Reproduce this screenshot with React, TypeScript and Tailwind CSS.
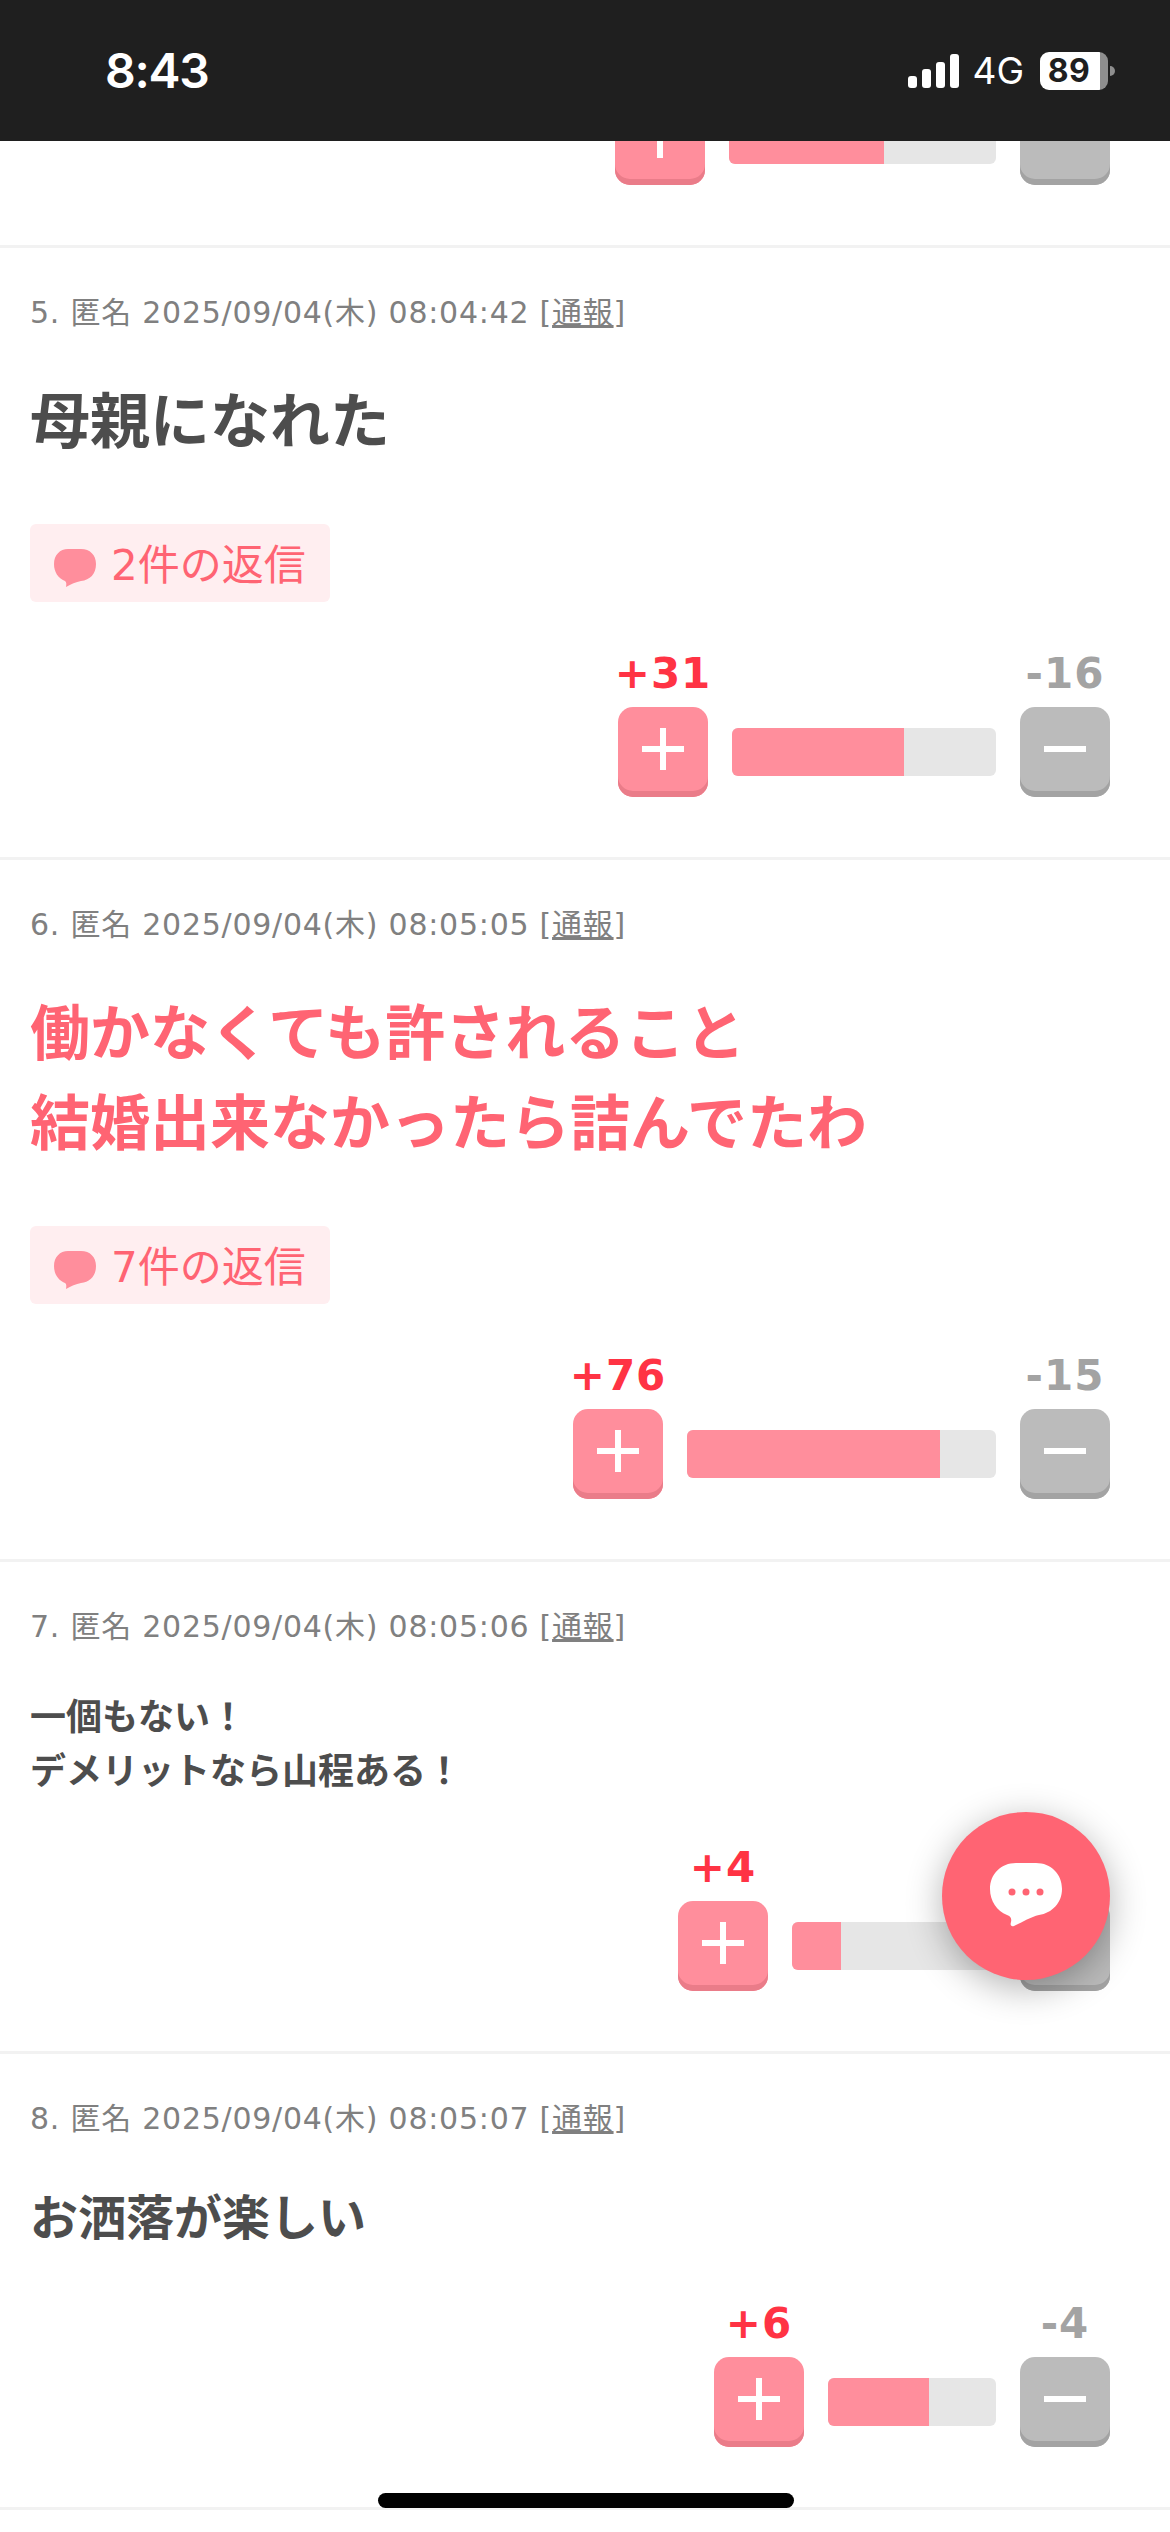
const posts = [
  {
    no: 5,
    time: "08:04:42",
    lines: ["母親になれた"],
    titleClass: "mt-[42px] mb-[-2px] text-[60px] leading-[90px] text-[#4d4d4d]",
    replies: 2,
    plus: 31,
    minus: 16,
    barClass: "w-[264px]",
    fill: 65,
  },
  {
    no: 6,
    time: "08:05:05",
    lines: ["働かなくても許されること", "結婚出来なかったら詰んでたわ"],
    titleClass: "mt-[42px] mb-[-2px] text-[60px] leading-[90px] text-[#ff6473]",
    replies: 7,
    plus: 76,
    minus: 15,
    barClass: "w-[309px]",
    fill: 82,
  },
  {
    no: 7,
    time: "08:05:06",
    lines: ["一個もない！", "デメリットなら山程ある！"],
    titleClass: "mt-[42px] mb-[-3px] text-[36px] leading-[54px] text-[#4d4d4d]",
    plus: 4,
    minus: 13,
    barClass: "w-[204px]",
    fill: 24,
  },
  {
    no: 8,
    time: "08:05:07",
    lines: ["お洒落が楽しい"],
    titleClass: "mt-[41px] mb-[-2px] text-[48px] leading-[72px] text-[#4d4d4d]",
    plus: 6,
    minus: 4,
    barClass: "w-[168px]",
    fill: 60,
  },
]

function PlusButton() {
  return (
    <div className="flex h-[90px] w-[90px] shrink-0 justify-center rounded-[15px] bg-[#ff8e9c] pt-[21px] shadow-[inset_0_-6px_0_#ea7c89]">
      <svg width="42" height="42" viewBox="0 0 42 42" fill="#fff">
        <rect x="18" y="0" width="6" height="42" />
        <rect x="0" y="18" width="42" height="6" />
      </svg>
    </div>
  )
}

function MinusButton() {
  return (
    <div className="flex h-[90px] w-[90px] shrink-0 justify-center rounded-[15px] bg-[#bbbbbb] pt-[21px] shadow-[inset_0_-6px_0_#a3a3a3]">
      <svg width="42" height="42" viewBox="0 0 42 42" fill="#fff">
        <rect x="0" y="18" width="42" height="6" />
      </svg>
    </div>
  )
}

function Bar({ barClass, fill }: { barClass: string; fill: number }) {
  return (
    <div className={`mb-[21px] h-12 overflow-hidden rounded-[6px] bg-[#e6e6e6] ${barClass}`}>
      <div className="h-full bg-[#ff8e9c]" style={{ width: `${fill}%` }} />
    </div>
  )
}

function VoteCount({ text, className }: { text: string; className: string }) {
  return (
    <div className={`mb-[6px] flex h-[54px] w-[90px] justify-center text-[42px] leading-[54px] font-bold tracking-[1px] whitespace-nowrap ${className}`}>
      {text}
    </div>
  )
}

function Post({ post }: { post: (typeof posts)[number] }) {
  return (
    <section className="border-b-[3px] border-[#f2f2f2] pt-[42px] pb-[60px]">
      <div className="px-[30px] text-[30px] leading-[45px] tracking-[0.75px] whitespace-nowrap text-[#808080]">
        {post.no}. 匿名 2025/09/04(木) {post.time} [<span className="underline">通報</span>]
      </div>
      <div className={`px-[30px] font-bold ${post.titleClass}`}>
        {post.lines.map((line) => (
          <div key={line}>{line}</div>
        ))}
      </div>
      {post.replies && (
        <div className="mt-[59px] ml-[30px] flex h-[78px] w-[300px] items-center rounded-[6px] bg-[#ffeef0] pl-6 text-[42px] text-[#ff6473]">
          <svg width="42" height="38" viewBox="0 0 42 38" fill="#ff8e9c" className="mt-[10px] mr-[15px]">
            <path d="M14 0H27C36 0 42 6 42 15C42 25 36 31 27 32C22 33 17 35 12 38C12.500 35 12.500 33 11 32C4 29 0 23 0 15C0 6 6 0 14 0Z" />
          </svg>
          <span className="pt-[4px]">{post.replies}件の返信</span>
        </div>
      )}
      <div className="mt-[45px] flex items-end justify-end gap-6 pr-[60px]">
        <div>
          <VoteCount text={`+${post.plus}`} className="text-[#ff3344]" />
          <PlusButton />
        </div>
        <Bar barClass={post.barClass} fill={post.fill} />
        <div>
          <VoteCount text={`-${post.minus}`} className="text-[#a3a3a3]" />
          <MinusButton />
        </div>
      </div>
    </section>
  )
}

export default function App() {
  return (
    <div className="relative h-[2532px] w-full overflow-hidden bg-white font-['DejaVu_Sans','Noto_Sans_CJK_JP',sans-serif]">
      {/* status bar */}
      <header className="flex h-[141px] items-center justify-between bg-[#1f1f1f] pr-[55px] pl-[105px] font-['Inter',sans-serif] text-white">
        <div className="text-[48px] leading-none font-semibold tracking-[-1.25px]">8:43</div>
        <div className="flex items-center">
          <svg width="51" height="34" viewBox="0 0 51 34" fill="#fff">
            <rect x="0" y="22" width="9" height="12" rx="3" />
            <rect x="14" y="15" width="9" height="19" rx="3" />
            <rect x="28" y="8" width="9" height="26" rx="3" />
            <rect x="42" y="0" width="9" height="34" rx="3" />
          </svg>
          <span className="ml-[13px] text-[37px] leading-none">4G</span>
          <div className="ml-[16px] flex h-[38px] w-[68px] items-center justify-center overflow-hidden rounded-[9px] bg-[linear-gradient(to_right,#fff_88%,#8e8e8e_88%)] pr-[10px] text-[32px] leading-none font-bold tracking-[0.5px] text-[#1f1f1f]">
            89
          </div>
          <div className="ml-[2px] h-[10px] w-[5px] rounded-r-full bg-[#8e8e8e]" />
        </div>
      </header>

      {/* previous post, scrolled under the status bar */}
      <section className="flex h-[107px] items-end justify-end gap-6 overflow-hidden border-b-[3px] border-[#f2f2f2] pr-[60px] pb-[60px]">
        <PlusButton />
        <Bar barClass="w-[267px]" fill={58} />
        <MinusButton />
      </section>

      {posts.map((post) => (
        <Post key={post.no} post={post} />
      ))}

      {/* floating post button */}
      <div className="absolute top-[1812px] right-[60px] flex h-[168px] w-[168px] items-center justify-center rounded-full bg-[#ff6473] shadow-[0_8px_36px_rgba(0,0,0,0.3)]">
        <svg width="72" height="64" viewBox="0 0 72 64" className="-mt-[2px]">
          <path
            fill="#fff"
            d="M26 0H46C61 0 72 11 72 26C72 40 62 50 49 52C40 54 31 60 24 63C21 64 20 62 21 59C22 55 20 53 17 52C7 48 0 38 0 26C0 11 11 0 26 0Z"
          />
          <circle cx="22" cy="29" r="3.500" fill="#ff6473" />
          <circle cx="36" cy="29" r="3.500" fill="#ff6473" />
          <circle cx="50" cy="29" r="3.500" fill="#ff6473" />
        </svg>
      </div>

      {/* home indicator */}
      <div className="absolute top-[2493px] left-[378px] h-[15px] w-[416px] rounded-[8px] bg-black" />
    </div>
  )
}
